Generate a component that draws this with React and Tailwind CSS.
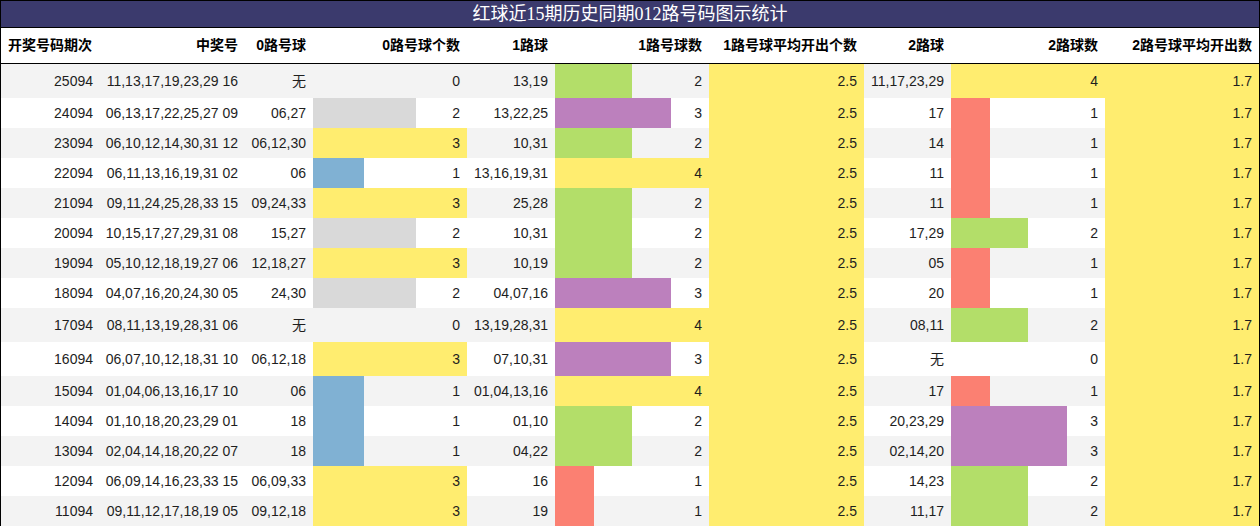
import React from "react";

const rows = [
  ["25094", "11,13,17,19,23,29 16", "无", 0, "13,19", 2, "11,17,23,29", 4],
  ["24094", "06,13,17,22,25,27 09", "06,27", 2, "13,22,25", 3, "17", 1],
  ["23094", "06,10,12,14,30,31 12", "06,12,30", 3, "10,31", 2, "14", 1],
  ["22094", "06,11,13,16,19,31 02", "06", 1, "13,16,19,31", 4, "11", 1],
  ["21094", "09,11,24,25,28,33 15", "09,24,33", 3, "25,28", 2, "11", 1],
  ["20094", "10,15,17,27,29,31 08", "15,27", 2, "10,31", 2, "17,29", 2],
  ["19094", "05,10,12,18,19,27 06", "12,18,27", 3, "10,19", 2, "05", 1],
  ["18094", "04,07,16,20,24,30 05", "24,30", 2, "04,07,16", 3, "20", 1],
  ["17094", "08,11,13,19,28,31 06", "无", 0, "13,19,28,31", 4, "08,11", 2],
  ["16094", "06,07,10,12,18,31 10", "06,12,18", 3, "07,10,31", 3, "无", 0],
  ["15094", "01,04,06,13,16,17 10", "06", 1, "01,04,13,16", 4, "17", 1],
  ["14094", "01,10,18,20,23,29 01", "18", 1, "01,10", 2, "20,23,29", 3],
  ["13094", "02,04,14,18,20,22 07", "18", 1, "04,22", 2, "02,14,20", 3],
  ["12094", "06,09,14,16,23,33 15", "06,09,33", 3, "16", 1, "14,23", 2],
  ["11094", "09,11,12,17,18,19 05", "09,12,18", 3, "19", 1, "11,17", 2],
];

// bar colours per column, keyed by count
const zeroColors = { 1: "bg-[#80b1d3]", 2: "bg-[#d9d9d9]", 3: "bg-[#ffed6f]" };
const otherColors = { 1: "bg-[#fb8072]", 2: "bg-[#b3de69]", 3: "bg-[#bc80bd]", 4: "bg-[#ffed6f]" };

const headers = [
  "开奖号码期次",
  "中奖号",
  "0路号球",
  "0路号球个数",
  "1路球",
  "1路号球数",
  "1路号球平均开出个数",
  "2路球",
  "2路球数",
  "2路号球平均开出数",
];

const grid =
  "grid grid-cols-[99px_145px_68px_154px_88px_154px_155px_87px_154px_154px]";

function Cell({ children }) {
  return <div className="flex items-center justify-end pr-[7px]">{children}</div>;
}

function BarCell({ value, max, colors }) {
  return (
    <div className="relative flex items-center justify-end pr-[7px]">
      {value > 0 && (
        <div
          className={`absolute inset-y-0 left-0 ${colors[value]}`}
          style={{ width: `${(value / max) * 100}%` }}
        />
      )}
      <span className="relative">{value}</span>
    </div>
  );
}

export default function App() {
  return (
    <div
      className="w-[1260px] bg-white border-x border-black text-[14px] text-[#1e1e1e]"
      style={{ fontFamily: '"Liberation Sans", "Noto Sans CJK SC", sans-serif' }}
    >
      <div
        className="h-[28px] -mx-px border border-black bg-[#3b3a6d] text-white text-[18px] flex items-center justify-center"
        style={{ fontFamily: '"Liberation Serif", "Noto Sans CJK SC", serif' }}
      >
        红球近15期历史同期012路号码图示统计
      </div>

      <div className={`${grid} h-[36px] border-b border-black font-bold text-black`}>
        {headers.map((h, i) => (
          <div
            key={h}
            className={i === 0 ? "flex items-center pl-[7px]" : "flex items-center justify-end pr-[7px]"}
          >
            {h}
          </div>
        ))}
      </div>

      {rows.map((r, i) => {
        const tall = r.includes("无");
        return (
          <div
            key={r[0]}
            className={`${grid} ${tall ? "h-[34px]" : "h-[30px]"} ${i % 2 === 0 ? "bg-[#f3f3f3]" : "bg-white"}`}
          >
            <Cell>{r[0]}</Cell>
            <Cell>{r[1]}</Cell>
            <Cell>{r[2]}</Cell>
            <BarCell value={r[3]} max={3} colors={zeroColors} />
            <Cell>{r[4]}</Cell>
            <BarCell value={r[5]} max={4} colors={otherColors} />
            <div className="flex items-center justify-end pr-[7px] bg-[#ffed6f]">2.5</div>
            <Cell>{r[6]}</Cell>
            <BarCell value={r[7]} max={4} colors={otherColors} />
            <div className="flex items-center justify-end pr-[7px] bg-[#ffed6f]">1.7</div>
          </div>
        );
      })}
    </div>
  );
}
